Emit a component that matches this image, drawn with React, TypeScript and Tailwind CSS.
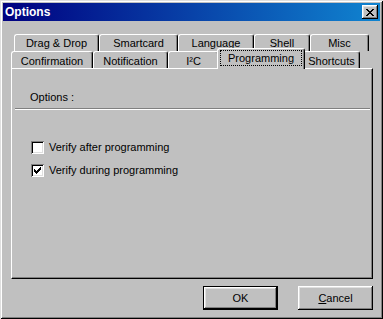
// Win9x-style "Options" dialog with a two-row tab strip and a Programming page.

const FONT = "font-['Liberation_Sans',Arial,sans-serif]";

function Tab({ label, width, pad }: { label: string; width: string; pad: string }) {
  return (
    <div
      className={`${width} ${pad} flex h-[17px] items-center justify-center rounded-t-[3px] border-l border-r border-t border-l-white border-r-black border-t-white shadow-[inset_-1px_0_#808080]`}
    >
      {label}
    </div>
  );
}

function Checkbox({ checked, label }: { checked: boolean; label: string }) {
  return (
    <div className="flex h-[13px] items-center gap-[5px]">
      <div className="flex h-[13px] w-[13px] items-center justify-center bg-white shadow-[inset_1px_1px_#808080,inset_-1px_-1px_#fff,inset_2px_2px_#000,inset_-2px_-2px_#dfdfdf]">
        {checked && (
          <svg width="7" height="7" viewBox="0 0 7 7" shapeRendering="crispEdges">
            <path d="M0 2h1v3H0zM1 3h1v3H1zM2 4h1v3H2zM3 3h1v3H3zM4 2h1v3H4zM5 1h1v3H5zM6 0h1v3H6z" fill="#000" />
          </svg>
        )}
      </div>
      <span>{label}</span>
    </div>
  );
}

export default function App() {
  return (
    <div
      className={`${FONT} relative h-[319px] w-[383px] bg-[#c0c0c0] p-[3px] text-[11px] leading-none text-black shadow-[inset_1px_1px_#dfdfdf,inset_-1px_-1px_#000,inset_2px_2px_#fff,inset_-2px_-2px_#808080]`}
    >
      {/* title bar */}
      <div className="flex h-[18px] items-center justify-between bg-[linear-gradient(to_right,#000080,#1084d0)] pl-[2px] pr-[2px]">
        <span className="text-[12px] font-bold text-white">Options</span>
        <div className="flex h-[14px] w-[16px] items-center justify-center bg-[#c0c0c0] shadow-[inset_-1px_-1px_#000,inset_1px_1px_#fff,inset_-2px_-2px_#808080,inset_2px_2px_#dfdfdf]">
          <svg width="8" height="7" viewBox="0 0 8 7" shapeRendering="crispEdges">
            <path
              d="M0 0h2v1H0zM6 0h2v1H6zM1 1h2v1H1zM5 1h2v1H5zM2 2h4v1H2zM3 3h2v1H3zM2 4h4v1H2zM1 5h2v1H1zM5 5h2v1H5zM0 6h2v1H0zM6 6h2v1H6z"
              fill="#000"
            />
          </svg>
        </div>
      </div>

      <div className="flex flex-col px-[8px]">
        {/* back row of tabs */}
        <div className="ml-[3px] mt-[13px] flex">
          <Tab label="Drag & Drop" width="w-[85px]" pad="pt-[1px]" />
          <Tab label="Smartcard" width="w-[79px]" pad="pt-[1px]" />
          <Tab label="Language" width="w-[76px]" pad="pt-[1px]" />
          <Tab label="Shell" width="w-[56px]" pad="pt-[1px]" />
          <Tab label="Misc" width="w-[59px]" pad="pt-[1px]" />
        </div>

        {/* front row of tabs */}
        <div className="flex h-[17px] items-start">
          <Tab label="Confirmation" width="w-[82px]" pad="pt-[2px]" />
          <Tab label="Notification" width="w-[75px]" pad="pt-[2px]" />
          <Tab label="I²C" width="w-[51px]" pad="pt-[2px]" />
          <div className="relative z-10 -mx-[2px] -mt-[3px] flex h-[21px] w-[88px] flex-col rounded-t-[3px] border-l border-r border-t border-l-white border-r-black border-t-white bg-[#c0c0c0] px-[2px] pt-[1px] shadow-[inset_-1px_0_#808080]">
            <div className="flex h-[16px] items-center justify-center border border-dotted border-black pt-[1px]">
              Programming
            </div>
          </div>
          <Tab label="Shortcuts" width="w-[57px]" pad="pt-[2px]" />
        </div>

        {/* tab page */}
        <div className="flex h-[211px] w-[362px] flex-col border border-b-black border-l-white border-r-black border-t-white shadow-[inset_-1px_-1px_#808080]">
          <div className="ml-[18px] mt-[23px] h-[12px]">Options :</div>
          <div className="ml-[3px] mr-[2px] mt-[4px] h-[2px] border-b border-t border-b-white border-t-[#808080]" />
          <div className="ml-[19px] mt-[31px] flex flex-col gap-[10px]">
            <Checkbox checked={false} label="Verify after programming" />
            <Checkbox checked label="Verify during programming" />
          </div>
        </div>

        {/* buttons */}
        <div className="mt-[7px] flex w-[362px] justify-end gap-[20px]">
          <div className="flex h-[24px] w-[75px] items-center justify-center border border-black bg-[#c0c0c0] shadow-[inset_-1px_-1px_#000,inset_1px_1px_#fff,inset_-2px_-2px_#808080,inset_2px_2px_#dfdfdf]">
            OK
          </div>
          <div className="flex h-[24px] w-[75px] items-center justify-center bg-[#c0c0c0] shadow-[inset_-1px_-1px_#000,inset_1px_1px_#fff,inset_-2px_-2px_#808080,inset_2px_2px_#dfdfdf]">
            <span>
              <span className="underline">C</span>ancel
            </span>
          </div>
        </div>
      </div>
    </div>
  );
}
